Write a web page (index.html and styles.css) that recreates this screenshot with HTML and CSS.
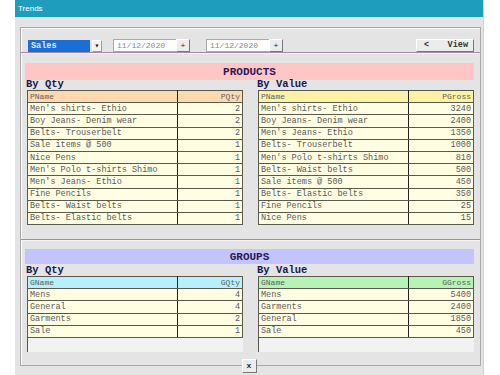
FILE: index.html
```html
<!DOCTYPE html>
<html lang="en">
<head>
    <meta charset="UTF-8">
    <title>Trends</title>
    <link rel="stylesheet" href="styles.css">
</head>
<body>

<!--窗口-->
<div class="window">

    <!--标题栏-->
    <div class="titlebar">Trends</div>

    <!--分组框-->
    <div class="frame">

        <!--工具栏-->
        <div class="toolbar">
            <div class="combo">
                <div class="combo-value">Sales</div>
                <div class="combo-arrow">&#9662;</div>
            </div>
            <div class="date">
                <div class="date-value">11/12/2020</div>
                <div class="btn plus">+</div>
            </div>
            <div class="date">
                <div class="date-value">11/12/2020</div>
                <div class="btn plus">+</div>
            </div>
            <div class="btn view"><span>&lt;</span><span>View</span></div>
        </div>

        <div class="sep"></div>

        <!--产品-->
        <div class="section products">
            <div class="bar bar-pink">PRODUCTS</div>
            <div class="cols">
                <div class="col">
                    <div class="label">By Qty</div>
                    <table class="grid">
                        <tr class="head head-peach"><td>PName</td><td class="num">PQty</td></tr>
                        <tr><td>Men's shirts- Ethio</td><td class="num">2</td></tr>
                        <tr><td>Boy Jeans- Denim wear</td><td class="num">2</td></tr>
                        <tr><td>Belts- Trouserbelt</td><td class="num">2</td></tr>
                        <tr><td>Sale items @ 500</td><td class="num">1</td></tr>
                        <tr><td>Nice Pens</td><td class="num">1</td></tr>
                        <tr><td>Men's Polo t-shirts Shimo</td><td class="num">1</td></tr>
                        <tr><td>Men's Jeans- Ethio</td><td class="num">1</td></tr>
                        <tr><td>Fine Pencils</td><td class="num">1</td></tr>
                        <tr><td>Belts- Waist belts</td><td class="num">1</td></tr>
                        <tr><td>Belts- Elastic belts</td><td class="num">1</td></tr>
                    </table>
                </div>
                <div class="col">
                    <div class="label">By Value</div>
                    <table class="grid">
                        <tr class="head head-yellow"><td>PName</td><td class="num">PGross</td></tr>
                        <tr><td>Men's shirts- Ethio</td><td class="num">3240</td></tr>
                        <tr><td>Boy Jeans- Denim wear</td><td class="num">2400</td></tr>
                        <tr><td>Men's Jeans- Ethio</td><td class="num">1350</td></tr>
                        <tr><td>Belts- Trouserbelt</td><td class="num">1000</td></tr>
                        <tr><td>Men's Polo t-shirts Shimo</td><td class="num">810</td></tr>
                        <tr><td>Belts- Waist belts</td><td class="num">500</td></tr>
                        <tr><td>Sale items @ 500</td><td class="num">450</td></tr>
                        <tr><td>Belts- Elastic belts</td><td class="num">350</td></tr>
                        <tr><td>Fine Pencils</td><td class="num">25</td></tr>
                        <tr><td>Nice Pens</td><td class="num">15</td></tr>
                    </table>
                </div>
            </div>
        </div>

        <div class="sep sep-mid"></div>

        <!--分组-->
        <div class="section groups">
            <div class="bar bar-blue">GROUPS</div>
            <div class="cols">
                <div class="col">
                    <div class="label">By Qty</div>
                    <div class="box">
                        <table class="grid">
                            <tr class="head head-cyan"><td>GName</td><td class="num">GQty</td></tr>
                            <tr><td>Mens</td><td class="num">4</td></tr>
                            <tr><td>General</td><td class="num">4</td></tr>
                            <tr><td>Garments</td><td class="num">2</td></tr>
                            <tr><td>Sale</td><td class="num">1</td></tr>
                        </table>
                    </div>
                </div>
                <div class="col">
                    <div class="label">By Value</div>
                    <div class="box">
                        <table class="grid">
                            <tr class="head head-green"><td>GName</td><td class="num">GGross</td></tr>
                            <tr><td>Mens</td><td class="num">5400</td></tr>
                            <tr><td>Garments</td><td class="num">2400</td></tr>
                            <tr><td>General</td><td class="num">1850</td></tr>
                            <tr><td>Sale</td><td class="num">450</td></tr>
                        </table>
                    </div>
                </div>
            </div>
        </div>

    </div>

    <!--关闭按钮-->
    <div class="footer">
        <div class="btn close">x</div>
    </div>

</div>

</body>
</html>
```

FILE: styles.css
```css
/*去除默认样式*/
* {
    margin: 0;
    padding: 0;
    box-sizing: border-box;
}

body {
    background-color: #fff;
    font-family: "Liberation Mono", monospace;
}

/*窗口*/
.window {
    width: 469px;
    height: 375px;
    margin-left: 15px;
    background-color: #e4e4e4;
    border-right: 1px solid #d0d0d0;
    display: flex;
    flex-direction: column;
}

.titlebar {
    height: 17px;
    background-color: #1e9dbd;
    color: #fff;
    font: 8px/17px "Liberation Sans", sans-serif;
    padding-left: 3px;
}

/*分组框*/
.frame {
    margin: 10px 2px 0 5px;
    height: 339px;
    border: 1px solid #a8a8a8;
    box-shadow: inset 1px 1px 0 #fff;
    display: flex;
    flex-direction: column;
}

/*工具栏*/
.toolbar {
    display: flex;
    align-items: center;
    padding: 11px 6px 0 7px;
    height: 24px;
}

.combo {
    display: flex;
    align-items: center;
    height: 12px;
}

.combo-value {
    width: 62px;
    height: 12px;
    background-color: #1a6fd6;
    color: #e8f0ff;
    font-weight: bold;
    font-size: 8.5px;
    line-height: 12px;
    padding-left: 3px;
}

.combo-arrow {
    width: 10px;
    height: 12px;
    margin-left: 2px;
    background-color: #f2f2f2;
    border: 1px solid #999;
    border-top-color: #fff;
    border-left-color: #fff;
    font-size: 8px;
    line-height: 10px;
    text-align: center;
    color: #111;
}

.date {
    display: flex;
    margin-left: 11px;
}

.date + .date {
    margin-left: 16px;
}

.date-value {
    width: 63px;
    height: 13px;
    background-color: #fff;
    border: 1px solid #aaa;
    border-right: none;
    color: #888;
    font-size: 8px;
    line-height: 11px;
    padding-left: 3px;
}

.btn {
    background-color: #ececec;
    border: 1px solid #777;
    border-top-color: #fff;
    border-left-color: #fff;
    color: #222;
    font-size: 8px;
    text-align: center;
}

.plus {
    width: 14px;
    height: 13px;
    line-height: 11px;
}

.view {
    margin-left: auto;
    width: 58px;
    height: 13px;
    display: flex;
    justify-content: space-between;
    padding: 0 5px 0 7px;
    font-size: 8.5px;
    line-height: 11px;
    font-weight: bold;
    color: #333;
}

/*分隔线*/
.sep {
    height: 2px;
    border-top: 1px solid #a88aa8;
    border-bottom: 1px solid #f4f0f4;
}

.sep-mid {
    margin-top: 14px;
}

/*区块*/
.section {
    padding: 0 6px 0 4px;
}

.products {
    padding-top: 9px;
}

.groups {
    padding-top: 8px;
}

.bar {
    font-size: 11px;
    font-weight: bold;
    text-align: center;
    color: #2a1a5a;
}

.bar-pink {
    height: 17px;
    line-height: 19px;
    background-color: #ffc6c6;
}

.bar-blue {
    height: 15px;
    line-height: 16px;
    background-color: #c4c4fc;
}

.cols {
    display: grid;
    grid-template-columns: 216px 216px;
    column-gap: 15px;
    padding: 0 1px 0 2px;
}

.label {
    height: 10px;
    font-size: 10.5px;
    font-weight: bold;
    line-height: 9px;
    color: #1a1a50;
    margin-left: -1px;
}

.groups .label {
    height: 12px;
    line-height: 12px;
}

/*表格*/
.grid {
    width: 216px;
    border-collapse: collapse;
    font-size: 8.5px;
    color: #5a5a5a;
}

.grid td {
    height: 12.2px;
    line-height: 10px;
    padding: 0 2px;
    border: 1px solid #5a5a4a;
    background-color: #fffde2;
    white-space: nowrap;
}

.grid td:first-child {
    width: 150px;
    border-right-color: #222;
}

.grid .num {
    text-align: right;
}

.head td {
    font-size: 8px;
    color: #606060;
}

.head-peach td {
    background-color: #fdd9b2;
}

.head-yellow td {
    background-color: #fdf1a6;
}

.head-cyan td {
    background-color: #b6f0fe;
}

.head-green td {
    background-color: #b6f4b6;
}

.box {
    height: 76px;
    background-color: #f2f2f2;
    border-left: 1px solid #555;
}

.box .grid {
    margin-left: -1px;
}

/*底部*/
.footer {
    display: flex;
    justify-content: center;
    margin-top: -7px;
}

.close {
    width: 15px;
    height: 14px;
    line-height: 12px;
    font-weight: bold;
    font-size: 8px;
}
```
